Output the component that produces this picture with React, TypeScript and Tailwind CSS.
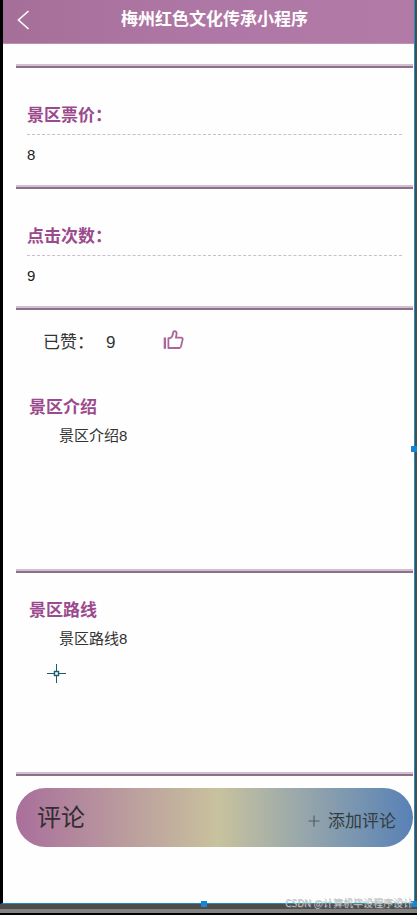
import type { ReactNode } from "react";

/** Two-tone rule between the blocks of the page. */
function Divider() {
  return <div className="h-1 border-t-2 border-b-2 border-t-[#d3bdd1] border-b-[#8b7189]" />;
}

function Field({ label, value }: { label: string; value: string }) {
  return (
    <>
      <dl className="px-[11px] pt-9 pb-5">
        <dt className="border-b border-dashed border-[#cdbccb] pb-[6px] text-[17px] leading-6 font-bold text-[#9b4a8d]">
          {label}
        </dt>
        <dd className="mt-[10px] text-[15px] leading-5 text-[#222]">{value}</dd>
      </dl>
      <Divider />
    </>
  );
}

function Description({ title, children }: { title: string; children: ReactNode }) {
  return (
    <>
      <section className="min-h-[199px] px-[13px] pt-[26px]">
        <h2 className="text-[17px] leading-6 font-bold text-[#9b4a8d]">{title}</h2>
        <p className="mt-[6px] pl-[30px] text-[15px] leading-5 text-[#333]">{children}</p>
      </section>
      <Divider />
    </>
  );
}

function ThumbIcon() {
  return (
    <svg width="21" height="20" viewBox="0 0 21 20" fill="none" stroke="#a8679b" strokeWidth="1.8" aria-hidden="true">
      <path d="M1.9 7.5V18.8" strokeWidth="2.4" />
      <path
        strokeLinejoin="round"
        d="M5.4 8.2H7.2C9 7.2 9.8 5.4 10 3.2C10.1 1.6 11 1 12 1.2C13.4 1.5 13.8 3 13.5 4.6L12.9 7.6H18C19.3 7.6 19.9 8.4 19.6 9.6L18 16.5C17.7 17.6 17.1 18 16.2 18H5.4Z"
      />
    </svg>
  );
}

/** Crosshair pointer left over the page. */
function Crosshair() {
  return (
    <svg
      className="pointer-events-none absolute top-[664px] left-11"
      width="19"
      height="19"
      viewBox="0 0 19 19"
      fill="none"
      stroke="#1b5a70"
      aria-hidden="true"
    >
      <path d="M9.5 0V7M9.5 12V19M0 9.5H7M12 9.5H19" />
      <rect x="7.5" y="7.5" width="4" height="4" strokeWidth="1.4" />
    </svg>
  );
}

export default function App() {
  return (
    <div className="relative flex min-h-screen flex-col bg-[#4d4d4d] font-['Liberation_Sans','Noto_Sans_CJK_SC',sans-serif]">
      <div className="relative mr-[2px] flex-1 border-r border-b border-l-[3px] border-r-[#168fc4] border-b-[#168fc4] border-l-black bg-[#fefefe]">
        <header className="grid h-11 grid-cols-[40px_1fr_28px] items-center border-b border-[#bd91b4] bg-linear-to-r from-[#a66f99] via-[#af77a5] to-[#b27aa7] pb-1 text-white">
          <button type="button" aria-label="返回" className="flex h-8 items-center pl-[14px]">
            <svg width="13" height="20" viewBox="0 0 13 20" fill="none" stroke="currentColor" strokeWidth="1.6" aria-hidden="true">
              <path d="M11.5 1L1.5 10L11.5 19" />
            </svg>
          </button>
          <h1 className="text-center text-[17px] leading-6 font-bold">梅州红色文化传承小程序</h1>
        </header>

        <main className="pt-5 pr-px pb-14 pl-[13px]">
          <Divider />
          <Field label="景区票价：" value="8" />
          <Field label="点击次数：" value="9" />

          <div className="flex h-[60px] items-center pt-[6px] pl-[27px] text-[17px] leading-6 text-[#333]">
            <span>已赞：</span>
            <span className="ml-3">9</span>
            <button type="button" aria-label="点赞" className="ml-12 pb-[6px]">
              <ThumbIcon />
            </button>
          </div>

          <Description title="景区介绍">景区介绍8</Description>
          <Description title="景区路线">景区路线8</Description>

          <div className="mt-3 flex h-[59px] items-center justify-between rounded-full bg-linear-to-r from-[#a96f9b] via-[#c8c29d] via-51% to-[#5881b5] pr-[17px] pl-[21px]">
            <h2 className="text-2xl leading-8 text-[#332d33]">评论</h2>
            <button type="button" className="flex gap-2 pt-2 text-[17px] leading-6 text-[#333c40]">
              <svg className="mt-[5px]" width="12" height="12" viewBox="0 0 12 12" fill="none" stroke="#555f60" aria-hidden="true">
                <path d="M6 0.5V11.5M0.5 6H11.5" strokeWidth="1.2" />
              </svg>
              添加评论
            </button>
          </div>
        </main>

        <Crosshair />
        <span className="absolute top-1/2 -right-[3px] mt-[-6px] h-[6px] w-[6px] bg-[#1287d3]" />
        <span className="absolute -bottom-[4px] left-1/2 -ml-2 h-[6px] w-[6px] bg-[#1287d3]" />
        <span className="absolute -right-[3px] -bottom-[4px] h-[6px] w-[6px] bg-[#1287d3]" />
      </div>

      <footer className="h-[11px] border-t-[5px] border-b-2 border-t-[#4d4d4d] border-b-black bg-[#828282]" />
      <p className="absolute right-1 bottom-[5px] font-['Noto_Sans_CJK_SC',sans-serif] text-[10px] leading-[14px] whitespace-nowrap text-[#c4c8c8] [text-shadow:1px_1px_0_#8888]">
        CSDN @计算机毕设程序设计
      </p>
    </div>
  );
}
